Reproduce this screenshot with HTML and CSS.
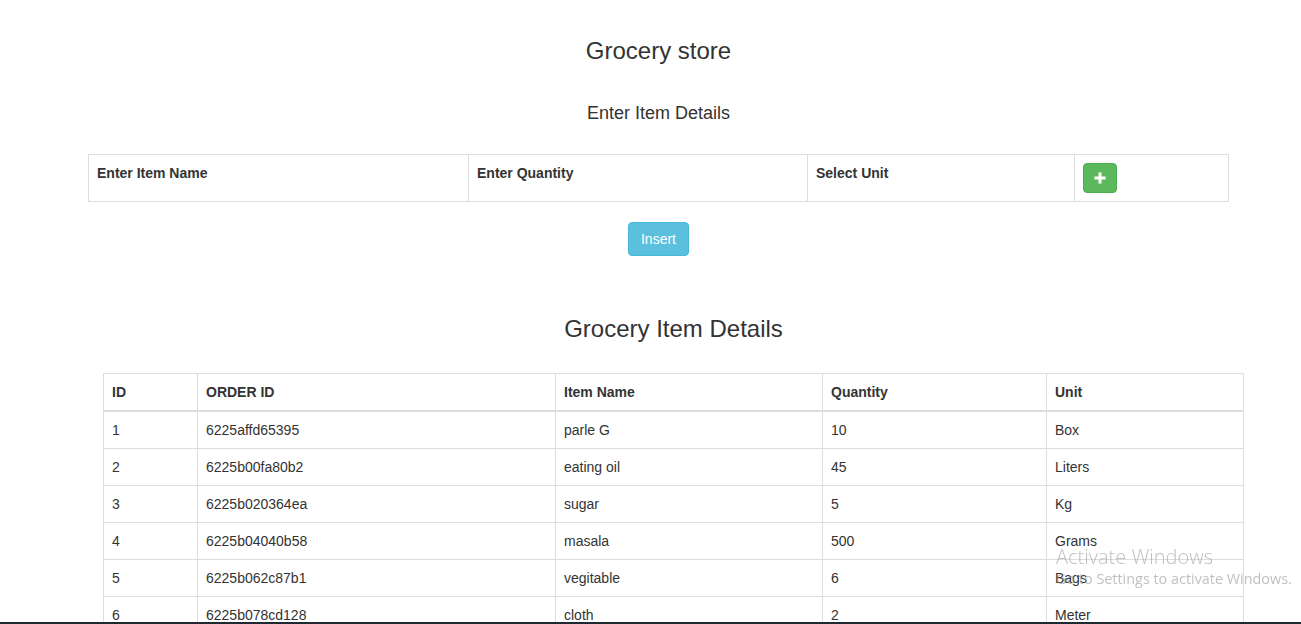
FILE: index.html
```html
<!DOCTYPE html>
<html>
<head>
<meta charset="utf-8">
<title>Grocery store</title>
<link rel="stylesheet" href="styles.css">
</head>
<body>
<section class="entry">
  <h3 class="title">Grocery store</h3>
  <h4 class="subtitle">Enter Item Details</h4>
  <table class="grid entry-grid">
    <colgroup>
      <col class="c-name"><col class="c-qty"><col class="c-unit"><col class="c-add">
    </colgroup>
    <tbody>
      <tr>
        <th>Enter Item Name</th>
        <th>Enter Quantity</th>
        <th>Select Unit</th>
        <th><button class="btn btn-add" type="button"><svg width="12" height="12" viewBox="0 0 12 12"><path d="M4.5 0.5h3v4h4v3h-4v4h-3v-4h-4v-3h4z" fill="#fff"/></svg></button></th>
      </tr>
    </tbody>
  </table>
  <div class="actions"><button class="btn btn-insert" type="button">Insert</button></div>
</section>
<section class="list">
  <h2 class="list-title">Grocery Item Details</h2>
  <table class="grid list-grid">
    <colgroup>
      <col class="c-id"><col class="c-order"><col class="c-item"><col class="c-quantity"><col class="c-u">
    </colgroup>
    <thead>
      <tr><th>ID</th><th>ORDER ID</th><th>Item Name</th><th>Quantity</th><th>Unit</th></tr>
    </thead>
    <tbody>
      <tr><td>1</td><td>6225affd65395</td><td>parle G</td><td>10</td><td>Box</td></tr>
      <tr><td>2</td><td>6225b00fa80b2</td><td>eating oil</td><td>45</td><td>Liters</td></tr>
      <tr><td>3</td><td>6225b020364ea</td><td>sugar</td><td>5</td><td>Kg</td></tr>
      <tr><td>4</td><td>6225b04040b58</td><td>masala</td><td>500</td><td>Grams</td></tr>
      <tr><td>5</td><td>6225b062c87b1</td><td>vegitable</td><td>6</td><td>Bags</td></tr>
      <tr><td>6</td><td>6225b078cd128</td><td>cloth</td><td>2</td><td>Meter</td></tr>
    </tbody>
  </table>
</section>
<div class="watermark">
  <div class="wm-title">Activate Windows</div>
  <div class="wm-text">Go to Settings to activate Windows.</div>
</div>
<div class="taskbar-edge"></div>
</body>
</html>
```
FILE: styles.css
```css
html, body {
  margin: 0;
  padding: 0;
  background: #fff;
}
body {
  font-family: "Liberation Sans", Arial, sans-serif;
  font-size: 14px;
  line-height: 20px;
  color: #333;
  overflow: hidden;
}
.entry {
  width: 1141px;
  margin-left: 88px;
}
.title {
  margin: 38px 0 0;
  font-size: 24px;
  font-weight: 500;
  line-height: 1.1;
  text-align: center;
}
.subtitle {
  margin: 40px 0 0;
  font-size: 18px;
  font-weight: 500;
  line-height: 1.1;
  text-align: center;
}
.grid {
  border-collapse: collapse;
  border-spacing: 0;
  table-layout: fixed;
  width: 1141px;
}
.grid th, .grid td {
  border: 1px solid #ddd;
  padding: 8px;
  line-height: 20px;
  text-align: left;
  vertical-align: top;
}
.grid th { font-weight: bold; }
.entry-grid { margin-top: 30px; }
.c-name { width: 380px; }
.c-qty { width: 339px; }
.c-unit { width: 267px; }
.c-add { width: 154px; }
.btn {
  display: inline-block;
  border: 1px solid transparent;
  border-radius: 4px;
  font-family: inherit;
  color: #fff;
  cursor: pointer;
  margin: 0;
}
.btn-add {
  width: 34px;
  height: 30px;
  padding: 0;
  background: #5cb85c;
  border-color: #4cae4c;
  display: flex;
  align-items: center;
  justify-content: center;
}
.btn-add svg { display: block; }
.actions {
  margin-top: 20px;
  text-align: center;
}
.btn-insert {
  height: 34px;
  padding: 6px 12px;
  font-size: 14px;
  line-height: 20px;
  background: #5bc0de;
  border-color: #46b8da;
}
.list {
  width: 1141px;
  margin-left: 103px;
}
.list-title {
  margin: 56px 0 0;
  font-size: 24px;
  font-weight: 500;
  line-height: 33px;
  text-align: center;
}
.list-grid { margin-top: 28px; }
.list-grid thead th { border-bottom-width: 2px; }
.list-grid td { font-weight: normal; }
.c-id { width: 94px; }
.c-order { width: 358px; }
.c-item { width: 267px; }
.c-quantity { width: 224px; }
.c-u { width: 197px; }
.watermark {
  position: fixed;
  left: 1056px;
  top: 543px;
  font-family: "Open Sans", "Noto Sans", sans-serif;
  color: rgba(150, 150, 150, 0.6);
  pointer-events: none;
}
.wm-title {
  font-size: 20px;
  line-height: 27px;
  font-weight: 300;
}
.wm-text {
  font-size: 14.4px;
  line-height: 18px;
}
.taskbar-edge {
  position: fixed;
  left: 0;
  right: 0;
  bottom: 0;
  height: 2px;
  background: #1f2a30;
}
```
